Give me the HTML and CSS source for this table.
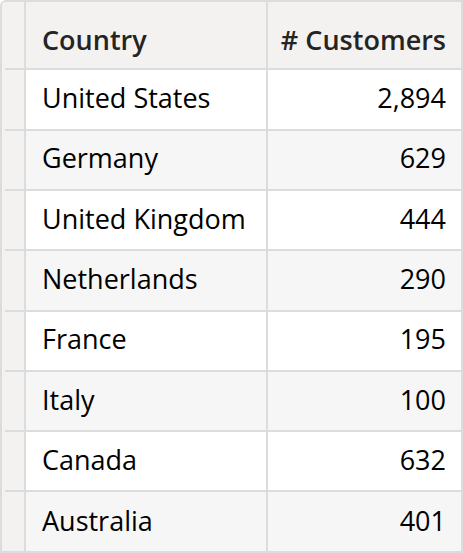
FILE: index.html
```html
<!DOCTYPE html>
<html lang="en">
<head>
<meta charset="utf-8">
<title>Customers by Country</title>
<link rel="stylesheet" href="styles.css">
</head>
<body>
<div class="table">
  <div class="row head">
    <div class="rh"></div>
    <div class="cell">Country</div>
    <div class="cell num">#&nbsp;Customers</div>
  </div>
  <div class="row">
    <div class="rh"></div>
    <div class="cell">United States</div>
    <div class="cell num">2,894</div>
  </div>
  <div class="row alt">
    <div class="rh"></div>
    <div class="cell">Germany</div>
    <div class="cell num">629</div>
  </div>
  <div class="row">
    <div class="rh"></div>
    <div class="cell">United Kingdom</div>
    <div class="cell num">444</div>
  </div>
  <div class="row alt">
    <div class="rh"></div>
    <div class="cell">Netherlands</div>
    <div class="cell num">290</div>
  </div>
  <div class="row">
    <div class="rh"></div>
    <div class="cell">France</div>
    <div class="cell num">195</div>
  </div>
  <div class="row alt">
    <div class="rh"></div>
    <div class="cell">Italy</div>
    <div class="cell num">100</div>
  </div>
  <div class="row">
    <div class="rh"></div>
    <div class="cell">Canada</div>
    <div class="cell num">632</div>
  </div>
  <div class="row alt last">
    <div class="rh"></div>
    <div class="cell">Australia</div>
    <div class="cell num">401</div>
  </div>
</div>
</body>
</html>
```

FILE: styles.css
```css
* { box-sizing: border-box; }
html, body { margin: 0; padding: 0; background: #ffffff; }
body {
  font-family: "Open Sans", "Noto Sans", sans-serif;
  font-size: 27px;
  color: #000000;
}
.table {
  width: 463px;
  border: 2px solid #dcdcdc;
  border-radius: 6px 0 0 0;
  background: #f3f2f1;
  overflow: hidden;
}
.row {
  display: grid;
  grid-template-columns: 24px 242px 193px;
  height: 60.3px;
  background: #ffffff;
}
.row.alt { background: #f6f6f6; }
.row.last { height: 58.3px; }
.row.head {
  height: 68.4px;
  background: #f3f2f1;
  font-weight: 600;
  color: #252423;
}
.rh {
  background: #f3f2f1;
  border-right: 2px solid #dcdcdc;
  position: relative;
}
.rh::after {
  content: "";
  position: absolute;
  left: 3px;
  right: 0;
  bottom: 0;
  height: 2px;
  background: #dcdcdc;
}
.row.last .rh::after { display: none; }
.cell {
  display: flex;
  align-items: center;
  padding: 0 15px 3px 16px;
  line-height: 36px;
  white-space: nowrap;
  border-bottom: 2px solid #dcdcdc;
}
.row.last .cell { border-bottom: none; padding-bottom: 1px; }
.row.head .cell { align-items: flex-end; padding-bottom: 10px; }
.row .cell:nth-child(2) { border-right: 2px solid #dcdcdc; }
.num { justify-content: flex-end; }
```
